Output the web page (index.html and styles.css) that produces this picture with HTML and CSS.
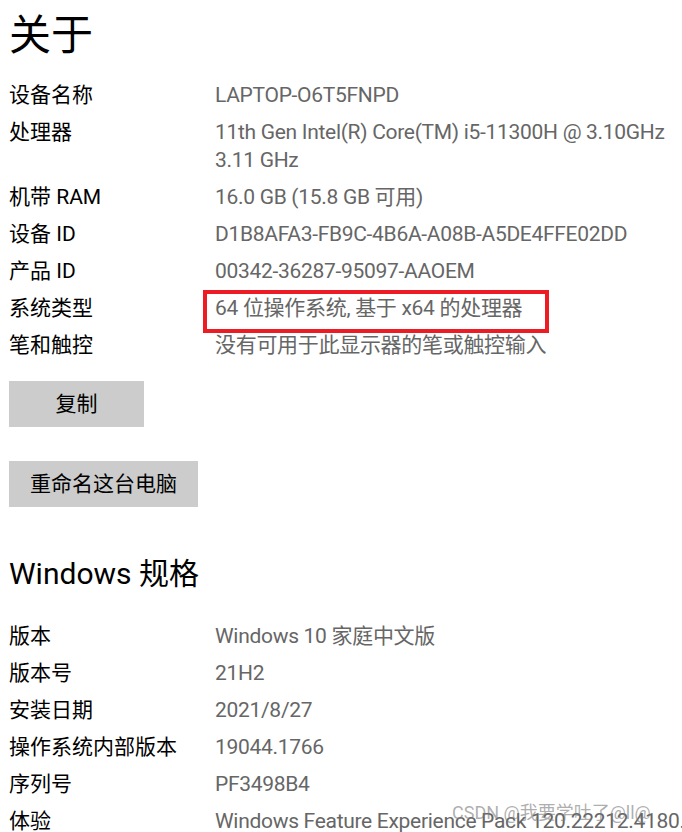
FILE: index.html
```html
<!DOCTYPE html>
<html lang="zh-CN">
<head>
    <meta charset="UTF-8">
    <meta name="viewport" content="width=device-width, initial-scale=1.0">
    <title>关于</title>
    <link rel="stylesheet" href="styles.css">
</head>
<body>
    <div class="page">
        <h1 class="title">关于</h1>

        <div class="specs">
            <div class="label">设备名称</div>
            <div class="value">LAPTOP-O6T5FNPD</div>

            <div class="label">处理器</div>
            <div class="value">11th Gen Intel(R) Core(TM) i5-11300H @ 3.10GHz<br>3.11 GHz</div>

            <div class="label">机带 RAM</div>
            <div class="value">16.0 GB (15.8 GB 可用)</div>

            <div class="label">设备 ID</div>
            <div class="value">D1B8AFA3-FB9C-4B6A-A08B-A5DE4FFE02DD</div>

            <div class="label">产品 ID</div>
            <div class="value">00342-36287-95097-AAOEM</div>

            <div class="label">系统类型</div>
            <div class="value"><span class="marked">64 位操作系统, 基于 x64 的处理器</span></div>

            <div class="label">笔和触控</div>
            <div class="value">没有可用于此显示器的笔或触控输入</div>
        </div>

        <div class="actions">
            <button class="btn">复制</button>
            <button class="btn">重命名这台电脑</button>
        </div>

        <h2 class="subtitle">Windows 规格</h2>

        <div class="specs">
            <div class="label">版本</div>
            <div class="value">Windows 10 家庭中文版</div>

            <div class="label">版本号</div>
            <div class="value">21H2</div>

            <div class="label">安装日期</div>
            <div class="value">2021/8/27</div>

            <div class="label">操作系统内部版本</div>
            <div class="value">19044.1766</div>

            <div class="label">序列号</div>
            <div class="value">PF3498B4</div>

            <div class="label">体验</div>
            <div class="value">Windows Feature Experience Pack 120.22212.4180.0</div>
        </div>
    </div>

    <div class="watermark">CSDN @我要学吐了@ll@</div>
</body>
</html>
```

FILE: styles.css
```css
html, body {
    margin: 0;
    padding: 0;
    overflow: hidden;
    background-color: #ffffff;
}
body {
    font-family: 'Roboto', 'Noto Sans CJK SC', sans-serif;
    color: #000000;
}
.page {
    padding-left: 9px;
}
.title {
    font-size: 42px;
    font-weight: normal;
    line-height: 71px;
    margin: 0 0 10px 0;
}
.specs {
    display: grid;
    grid-template-columns: 206px auto;
    row-gap: 9px;
    font-size: 21px;
    line-height: 28px;
}
.label {
    color: #000000;
    white-space: nowrap;
}
.value {
    color: #666666;
    letter-spacing: -0.3px;
    white-space: nowrap;
}
.marked {
    position: relative;
}
.marked::after {
    content: '';
    position: absolute;
    left: -12px;
    top: -6px;
    width: 338px;
    height: 35px;
    border: 4px solid #ed1c24;
}
.actions {
    display: flex;
    flex-direction: column;
    align-items: flex-start;
    gap: 34px;
    margin-top: 22px;
}
.btn {
    font-family: inherit;
    font-size: 21px;
    color: #000000;
    background-color: #cccccc;
    border: none;
    border-radius: 0;
    height: 46px;
    min-width: 135px;
    padding: 0 21px;
    line-height: 46px;
}
.subtitle {
    font-size: 30px;
    font-weight: normal;
    line-height: 48px;
    margin: 43px 0 24px 0;
}
.watermark {
    position: absolute;
    left: 452px;
    top: 798px;
    font-size: 18px;
    color: rgba(120, 120, 120, 0.6);
    white-space: nowrap;
}
```
